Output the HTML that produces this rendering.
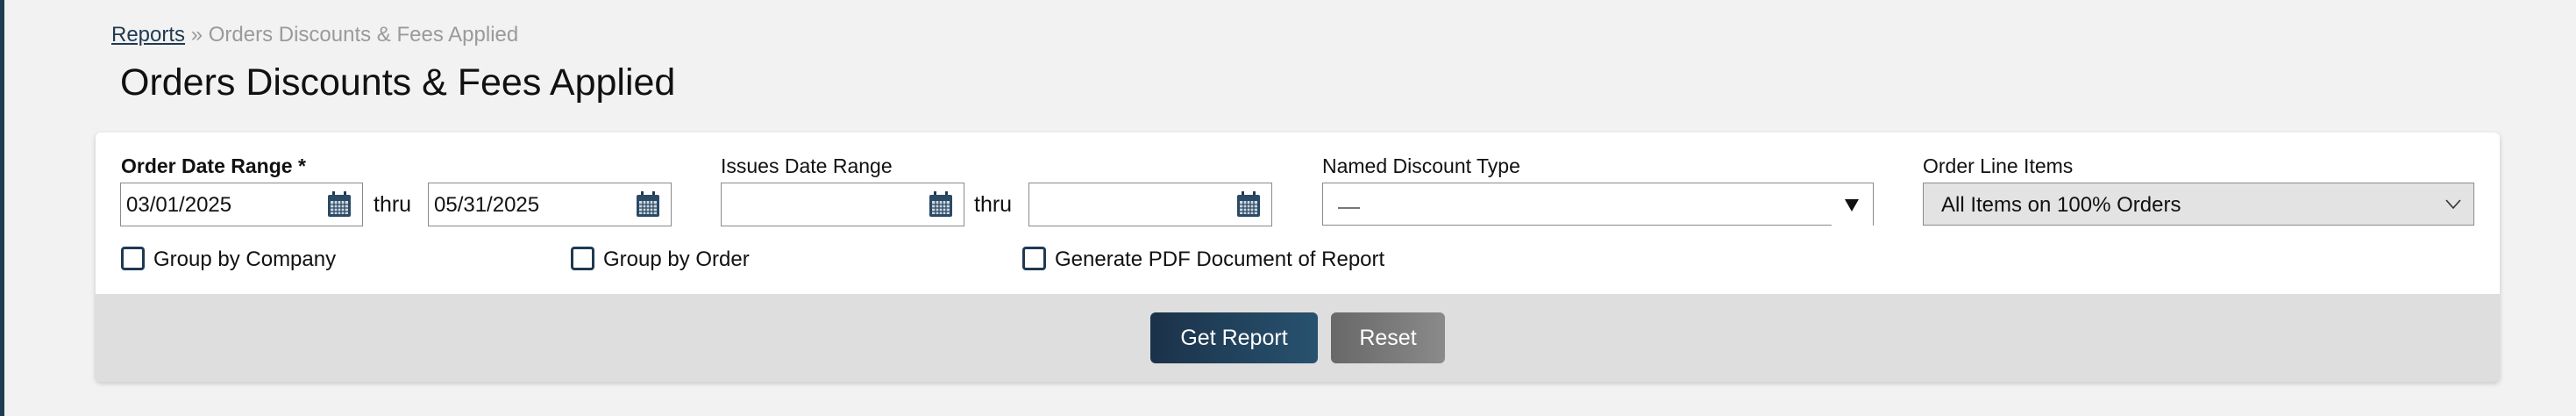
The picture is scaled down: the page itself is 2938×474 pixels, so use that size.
<!DOCTYPE html>
<html><head><meta charset="utf-8"><style>
*{box-sizing:border-box;margin:0;padding:0}
body{width:2938px;height:474px;background:#f2f2f2;font-family:"Liberation Sans",sans-serif;position:relative;overflow:hidden;color:#111}
.a{position:absolute}
.bar{left:0;top:0;width:5px;height:474px;background:#1f3a52}
.lbl{font-size:23px;top:176px}
.inp{height:50px;top:208px;border:1px solid #8a8a8a;background:#fff;font-size:24px;padding-left:6px;line-height:50px}
.cal{position:absolute;right:12px;top:9px}
.thru{font-size:25px;top:219px}
.cb{top:281px;width:27px;height:27px;border:3px solid #1f3a52;border-radius:4px;background:#fff}
.cbt{top:282px;font-size:24px;line-height:28px}
.btn{top:356px;height:58px;border-radius:6px;color:#fff;font-size:25px;text-align:center;line-height:58px}
</style></head><body>
<div class="a bar"></div>
<div class="a" style="left:127px;top:26px;font-size:24px;color:#9a9a9a"><span style="color:#1f3a52;text-decoration:underline">Reports</span> » Orders Discounts &amp; Fees Applied</div>
<div class="a" style="left:137px;top:70px;font-size:43px;color:#111">Orders Discounts &amp; Fees Applied</div>

<div class="a" style="left:109px;top:151px;width:2742px;height:284px;border-radius:6px;background:#dedede;box-shadow:0 2px 6px rgba(0,0,0,.18);overflow:hidden">
<div style="height:184px;background:#fff"></div>
</div>

<div class="a lbl" style="left:138px;font-weight:bold">Order Date Range *</div>
<div class="a inp" style="left:137px;width:277px">03/01/2025<svg class="cal" width="28" height="30" viewBox="0 0 28 30"><rect x="6" y="0" width="3" height="6" fill="#1f3a52"/><rect x="19" y="0" width="3" height="6" fill="#1f3a52"/><rect x="1" y="4" width="26" height="25" rx="2" fill="#2a4a66"/><rect x="4" y="11" width="20" height="15" fill="#cfd8e0"/><g stroke="#2a4a66" stroke-width="1.3"><path d="M8 11v15M12 11v15M16 11v15M20 11v15M4 15h20M4 19h20M4 23h20"/></g></svg></div>
<div class="a thru" style="left:426px">thru</div>
<div class="a inp" style="left:488px;width:278px">05/31/2025<svg class="cal" width="28" height="30" viewBox="0 0 28 30"><rect x="6" y="0" width="3" height="6" fill="#1f3a52"/><rect x="19" y="0" width="3" height="6" fill="#1f3a52"/><rect x="1" y="4" width="26" height="25" rx="2" fill="#2a4a66"/><rect x="4" y="11" width="20" height="15" fill="#cfd8e0"/><g stroke="#2a4a66" stroke-width="1.3"><path d="M8 11v15M12 11v15M16 11v15M20 11v15M4 15h20M4 19h20M4 23h20"/></g></svg></div>

<div class="a lbl" style="left:822px">Issues Date Range</div>
<div class="a inp" style="left:822px;width:278px"><svg class="cal" width="28" height="30" viewBox="0 0 28 30"><rect x="6" y="0" width="3" height="6" fill="#1f3a52"/><rect x="19" y="0" width="3" height="6" fill="#1f3a52"/><rect x="1" y="4" width="26" height="25" rx="2" fill="#2a4a66"/><rect x="4" y="11" width="20" height="15" fill="#cfd8e0"/><g stroke="#2a4a66" stroke-width="1.3"><path d="M8 11v15M12 11v15M16 11v15M20 11v15M4 15h20M4 19h20M4 23h20"/></g></svg></div>
<div class="a thru" style="left:1111px">thru</div>
<div class="a inp" style="left:1173px;width:278px"><svg class="cal" width="28" height="30" viewBox="0 0 28 30"><rect x="6" y="0" width="3" height="6" fill="#1f3a52"/><rect x="19" y="0" width="3" height="6" fill="#1f3a52"/><rect x="1" y="4" width="26" height="25" rx="2" fill="#2a4a66"/><rect x="4" y="11" width="20" height="15" fill="#cfd8e0"/><g stroke="#2a4a66" stroke-width="1.3"><path d="M8 11v15M12 11v15M16 11v15M20 11v15M4 15h20M4 19h20M4 23h20"/></g></svg></div>

<div class="a lbl" style="left:1508px">Named Discount Type</div>
<div class="a" style="left:1508px;top:208px;width:581px;height:49px;border:1px solid #8a8a8a;border-right:none;background:#fff"><div class="a" style="left:17px;top:27px;width:25px;height:2px;background:#777"></div></div>
<div class="a" style="left:2089px;top:208px;width:48px;height:49px;border-top:1px solid #8a8a8a;border-right:1px solid #8a8a8a;background:#fff"><svg class="a" style="left:15px;top:18px" width="16" height="14"><path d="M0 0H16L8 14Z" fill="#111"/></svg></div>

<div class="a lbl" style="left:2193px">Order Line Items</div>
<div class="a inp" style="left:2193px;width:629px;height:49px;background:#e3e3e3;padding-left:20px;font-size:24px;line-height:49px">All Items on 100% Orders<svg class="a" style="right:14px;top:18px" width="18" height="11"><path d="M1 1L9 10L17 1" fill="none" stroke="#333" stroke-width="1.6"/></svg></div>

<div class="a cb" style="left:138px"></div><div class="a cbt" style="left:175px">Group by Company</div>
<div class="a cb" style="left:651px"></div><div class="a cbt" style="left:688px">Group by Order</div>
<div class="a cb" style="left:1166px"></div><div class="a cbt" style="left:1203px">Generate PDF Document of Report</div>

<div class="a btn" style="left:1312px;width:191px;background:linear-gradient(90deg,#1b3249,#28526f)">Get Report</div>
<div class="a btn" style="left:1518px;width:130px;background:linear-gradient(90deg,#686868,#8a8a8a)">Reset</div>
</body></html>
